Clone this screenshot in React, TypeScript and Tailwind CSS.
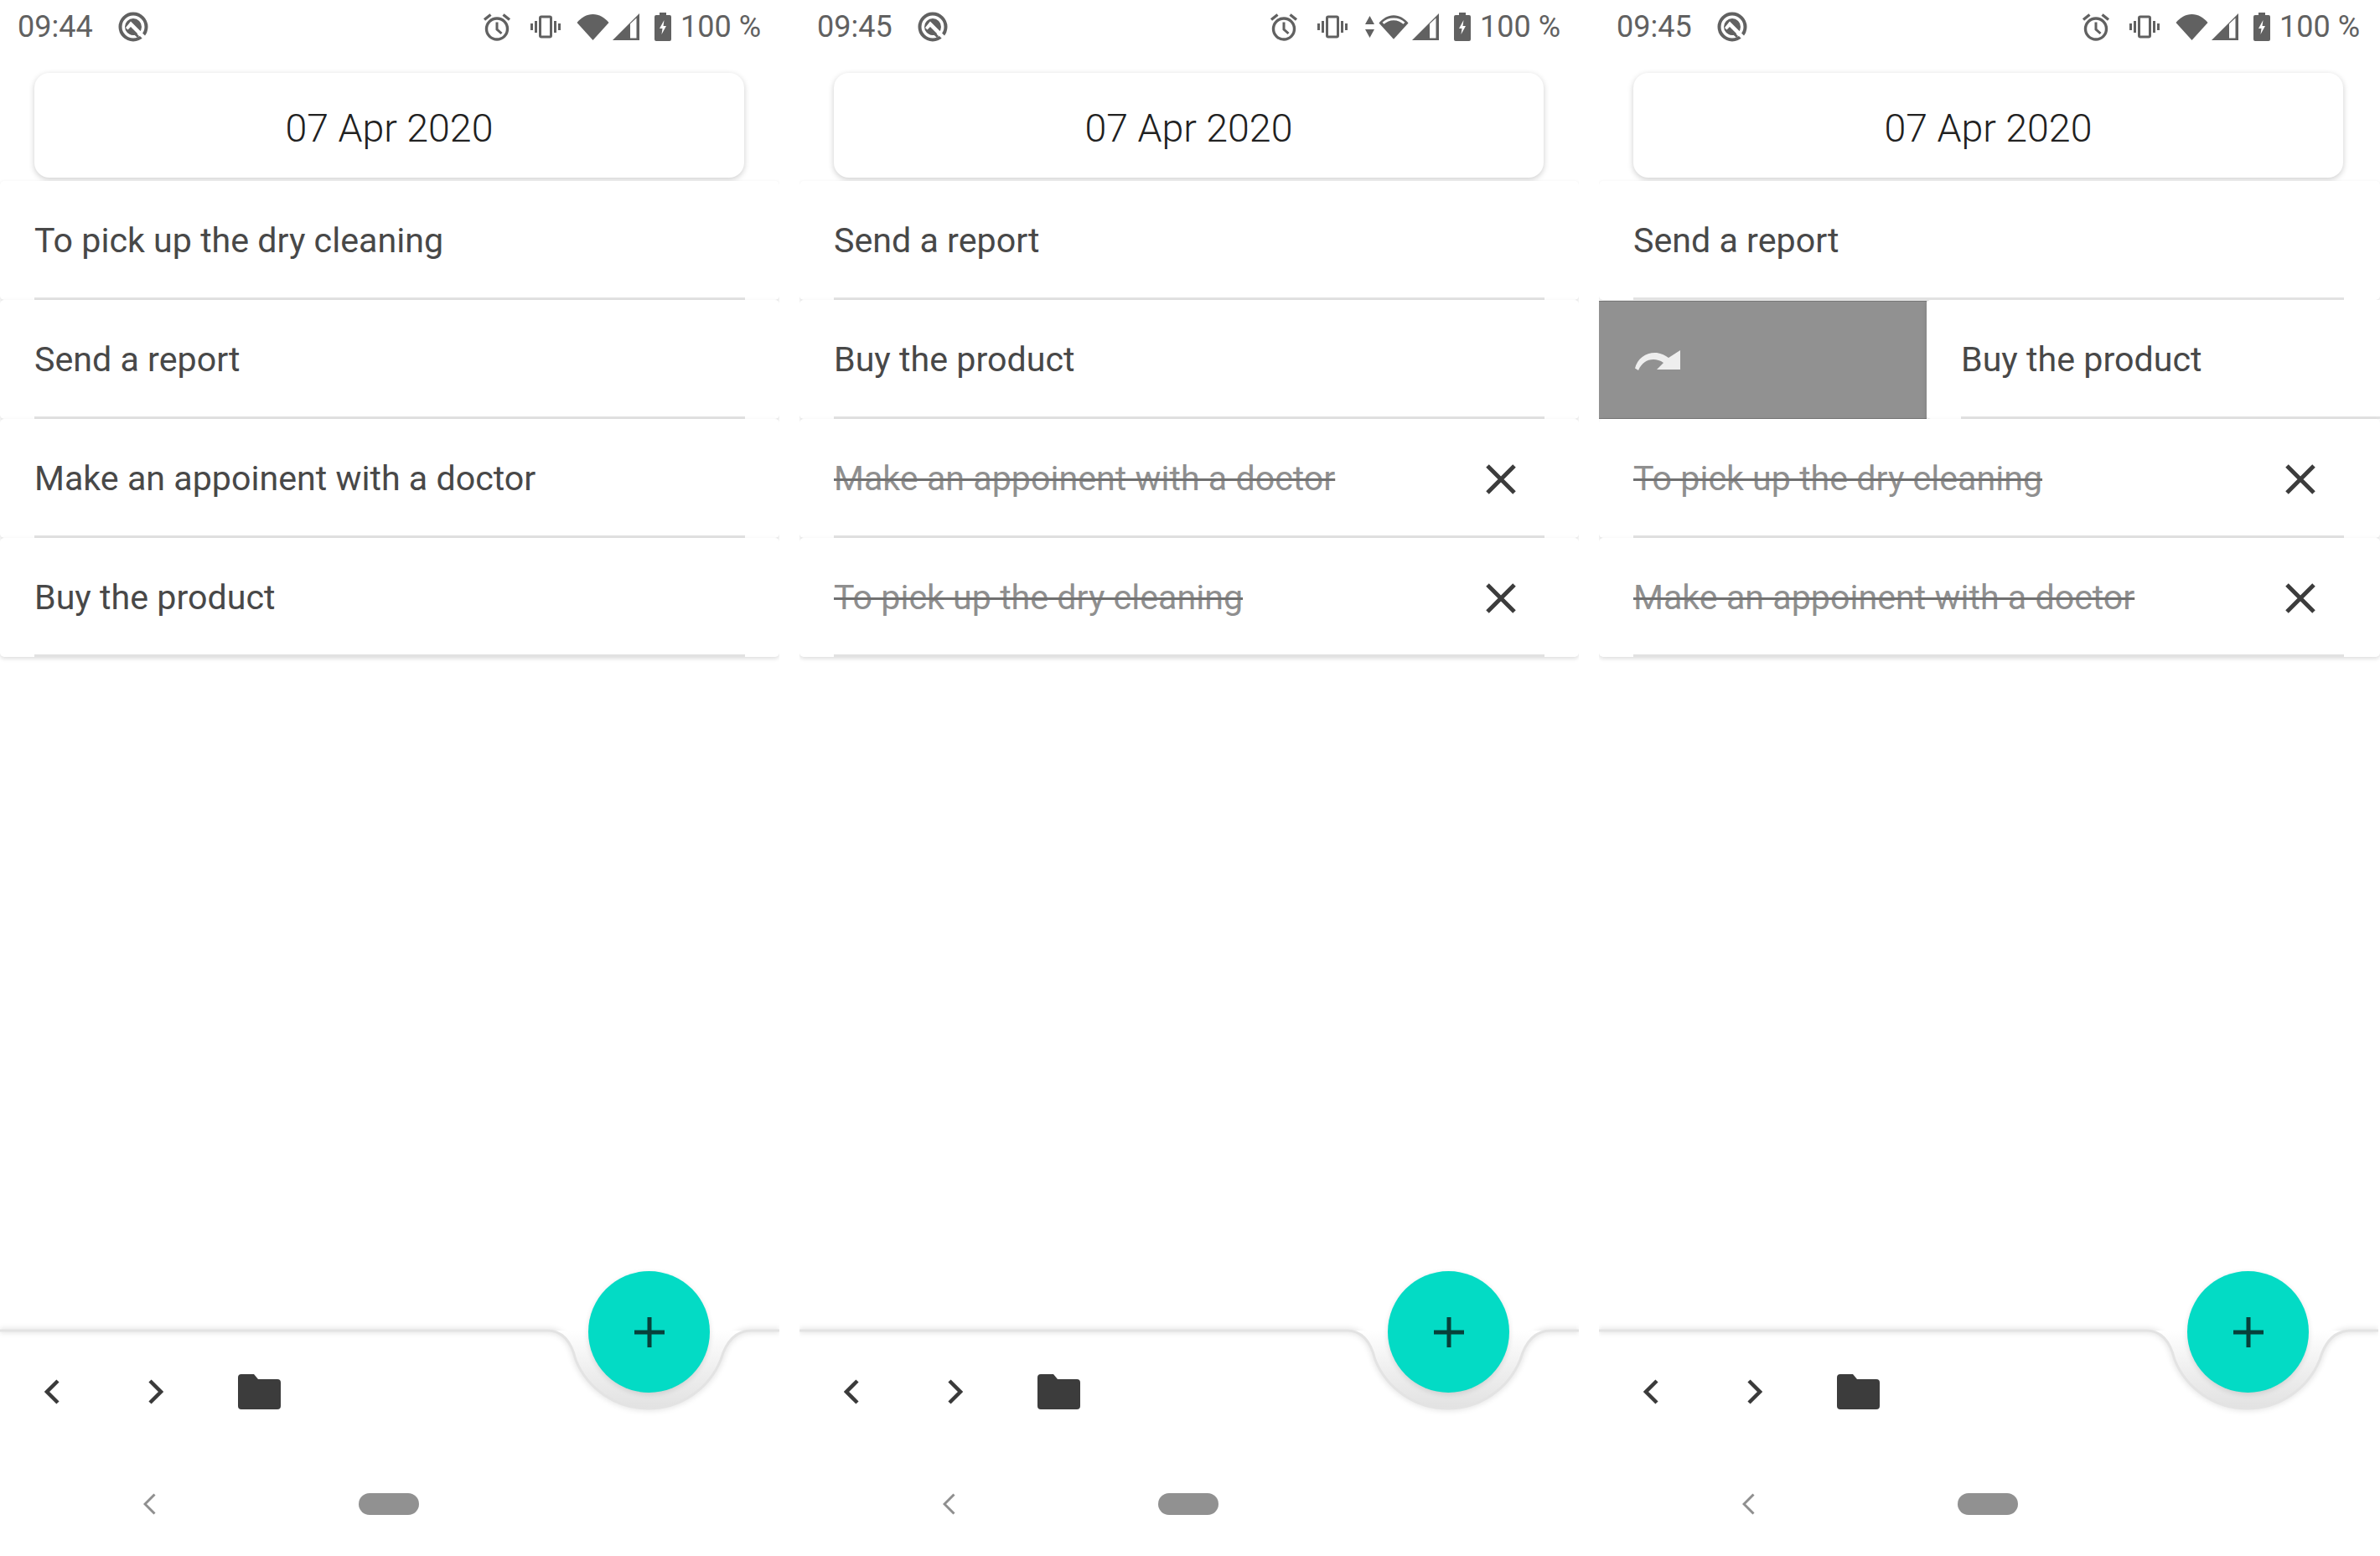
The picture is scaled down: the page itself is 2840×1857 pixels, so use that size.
type Item = { text: string; done?: boolean; swiped?: boolean };

const Alarm = () => (
  <svg width="34" height="34" viewBox="0 0 34 34" fill="none" stroke="#616161" strokeWidth="3.4">
    <circle cx="17" cy="19.5" r="12.5" />
    <path d="M17 11.5v8.5l5.5 5" strokeWidth="3" />
    <path d="M2 8.5 9.5 2.5M32 8.5 24.5 2.5" />
  </svg>
);

const Vibrate = () => (
  <svg width="36" height="28" viewBox="0 0 36 28" fill="none" stroke="#616161" strokeWidth="3">
    <rect x="11.5" y="2" width="13" height="24" rx="1.5" />
    <path d="M1.5 10v8M6.5 7v14M29.5 7v14M34.5 10v8" />
  </svg>
);

const Wifi = ({ active }: { active?: boolean }) => (
  <svg width="39" height="32" viewBox="0 0 39 32" className={active ? "w-[36px]" : ""}>
    <path d="M0.5 11C5.5 5 12 1 19.5 1S33.5 5 38.5 11L19.5 32Z" fill="#616161" />
    {active && <path d="M6 11.5C10 7.5 14.5 6 19.5 6S29 7.5 33 11.5" fill="none" stroke="#fff" strokeWidth="3" />}
  </svg>
);

const Signal = () => (
  <svg width="32" height="32" viewBox="0 0 32 32">
    <path d="M0 32 32 0V32Z" fill="#616161" />
    <path d="M21 31V12.500L28.500 5.500V29.500H21Z" fill="#fff" />
  </svg>
);

const Battery = () => (
  <svg width="20" height="34" viewBox="0 0 20 34">
    <path d="M6 0h8v3h4a2 2 0 0 1 2 2v27a2 2 0 0 1-2 2H2a2 2 0 0 1-2-2V5a2 2 0 0 1 2-2h4Z" fill="#616161" />
    <path d="M11.500 9 6 19h3.500l-1 7L14 16h-3.500Z" fill="#fff" />
  </svg>
);

const QLogo = () => (
  <svg width="36" height="36" viewBox="0 0 36 36" fill="none">
    <circle cx="18" cy="18" r="15.500" stroke="#616161" strokeWidth="4" />
    <circle cx="18" cy="18" r="10" fill="#616161" />
    {/* white fold running out to the lower right */}
    <path d="M15 11.500 33 29.500 30 33 15 18 11.500 21.500 9 19Z" fill="#fff" />
    <path d="M15 21.500 24 30" stroke="#616161" strokeWidth="3" />
    <path d="M16 24 20 28 15 27.500 12 24Z" fill="#616161" />
  </svg>
);

const StatusBar = ({ time, data }: { time: string; data?: boolean }) => (
  <div className="flex h-[87px] w-[930px] items-start justify-between pl-[21px] pr-[22px] pt-[14px] text-[36px] leading-[36px] text-[#616161]">
    <div className="flex items-center">
      <span className="w-[92px]">{time}</span>
      <span className="ml-[28px]">
        <QLogo />
      </span>
    </div>
    <div className="flex items-center">
      <Alarm />
      <span className="ml-[23px]">
        <Vibrate />
      </span>
      {data && (
        <svg width="15" height="30" viewBox="0 0 15 30" className="ml-[19px]">
          <path d="M7.500 2 13 12H2ZM7.500 28 2 18H13Z" fill="#616161" />
        </svg>
      )}
      <span className={data ? "ml-[3px]" : "ml-[19px]"}>
        <Wifi active={data} />
      </span>
      <span className="ml-[4px]">
        <Signal />
      </span>
      <span className="ml-[18px]">
        <Battery />
      </span>
      <span className="ml-[11px]">100 %</span>
    </div>
  </div>
);

const Row = ({ text, done }: Item) => (
  <div className="flex h-[142px] w-full min-w-[930px] shrink-0 flex-col rounded-[5px] bg-white shadow-[0_2px_5px_rgba(0,0,0,0.14)]">
    <div className="flex w-[930px] flex-1 items-center justify-between pl-[41px] pr-[75px] pt-[4px] text-[41.2px]">
      {done ? (
        <>
          <span className="text-[#8f8f8f] line-through decoration-[#707070] decoration-[3px]">{text}</span>
          <svg width="36" height="36" viewBox="0 0 36 36" stroke="#3c3c3c" strokeWidth="5">
            <path d="M2 2 34 34M34 2 2 34" />
          </svg>
        </>
      ) : (
        <span className="text-[#484848]">{text}</span>
      )}
    </div>
    <div className="ml-[41px] h-[3px] w-[848px] bg-[#e2e2e2]" />
  </div>
);

const SwipedRow = ({ text }: Item) => (
  <div className="flex h-[142px] overflow-hidden">
    <div className="mt-[1px] flex h-[141px] w-[391px] shrink-0 items-center border-y border-[#777777] bg-[#919191] pl-[43px]">
      <svg width="54" height="24" viewBox="0 0 54 24" fill="#eeeeee">
        <path d="M0 21.500C3 9 14 2 26 3C32 4 36 6 40 9L54 0V23H26L34 15C30 12 26 11 22 11C14 11 8 15 4 24Z" />
      </svg>
    </div>
    <Row text={text} />
  </div>
);

const BottomBar = () => (
  <div className="relative h-[279px] w-full">
    {/* curved top edge of the app bar, with the notch for the button */}
    <svg width="930" height="120" viewBox="0 0 930 120" fill="none" className="absolute left-0 top-0">
      <defs>
        <linearGradient id="notch" x1="0" y1="10" x2="0" y2="103" gradientUnits="userSpaceOnUse">
          <stop offset="0" stopColor="#ffffff" />
          <stop offset="0.5" stopColor="#efefef" />
          <stop offset="1" stopColor="#e2e2e2" />
        </linearGradient>
        <filter id="soft" x="-5%" y="-30%" width="110%" height="160%">
          <feGaussianBlur stdDeviation="3" />
        </filter>
      </defs>
      <path
        d="M0 10H653C672 10 682 24 687 45A93.500 93.500 0 0 0 860 45C866 24 877 10 897 10H930"
        stroke="#000000"
        strokeOpacity="0.12"
        strokeWidth="5"
        filter="url(#soft)"
      />
      <path d="M653 10C672 10 682 24 687 45A93.500 93.500 0 0 0 860 45C866 24 877 10 897 10Z" fill="url(#notch)" />
      <path
        d="M0 10H653C672 10 682 24 687 45A93.500 93.500 0 0 0 860 45C866 24 877 10 897 10H930"
        stroke="#e3e3e3"
        strokeWidth="3"
      />
    </svg>
    <div className="absolute left-[702px] top-[-61px] flex h-[145px] w-[145px] items-center justify-center rounded-full bg-[#03dbc5] shadow-[0_2px_6px_rgba(0,0,0,0.12)]">
      <svg width="36" height="36" viewBox="0 0 36 36" stroke="#07403a" strokeWidth="5">
        <path d="M18 0V36M0 18H36" />
      </svg>
    </div>
    <div className="flex items-center pl-[53px] pt-[62px]">
      <svg width="18" height="30" viewBox="0 0 18 30" fill="none" stroke="#3a3a3a" strokeWidth="4.500">
        <path d="M16 2 3 15 16 28" />
      </svg>
      <svg width="18" height="30" viewBox="0 0 18 30" fill="none" stroke="#3a3a3a" strokeWidth="4.500" className="ml-[106px]">
        <path d="M2 2 15 15 2 28" />
      </svg>
      <svg width="51" height="42" viewBox="0 0 51 42" fill="#3c3c3c" className="ml-[89px]">
        <path d="M4 0H19L24 6H47A4 4 0 0 1 51 10V38A4 4 0 0 1 47 42H4A4 4 0 0 1 0 38V4A4 4 0 0 1 4 0Z" />
      </svg>
    </div>
    <div className="mt-[100px] flex items-center pl-[171px]">
      <svg width="15" height="26" viewBox="0 0 15 26" fill="none" stroke="#8f8f8f" strokeWidth="3">
        <path d="M13.500 1.500 2 13 13.500 24.500" />
      </svg>
      <div className="ml-[242px] h-[26px] w-[72px] rounded-[13px] bg-[#919191]" />
    </div>
  </div>
);

const Panel = ({ time, data, items, className }: { time: string; data?: boolean; items: Item[]; className: string }) => (
  <div className={`flex h-full flex-col overflow-hidden bg-white ${className}`}>
    <StatusBar time={time} data={data} />
    <div className="mb-[4px] ml-[41px] flex h-[125px] w-[847px] items-center justify-center rounded-[18px] bg-white pt-[8px] text-[46.5px] font-light text-[#212121] shadow-[0_2px_7px_rgba(0,0,0,0.2)]">
      07 Apr 2020
    </div>
    {items.map((item) =>
      item.swiped ? <SwipedRow key={item.text} {...item} /> : <Row key={item.text} {...item} />
    )}
    <div className="flex-1" />
    <BottomBar />
  </div>
);

export default function App() {
  return (
    <div className="flex h-[1857px] w-[2840px] gap-[24px] bg-white font-[Roboto,sans-serif]">
      <Panel
        className="w-[930px]"
        time="09:44"
        items={[
          { text: "To pick up the dry cleaning" },
          { text: "Send a report" },
          { text: "Make an appoinent with a doctor" },
          { text: "Buy the product" },
        ]}
      />
      <Panel
        className="w-[930px]"
        time="09:45"
        data
        items={[
          { text: "Send a report" },
          { text: "Buy the product" },
          { text: "Make an appoinent with a doctor", done: true },
          { text: "To pick up the dry cleaning", done: true },
        ]}
      />
      <Panel
        className="w-[932px]"
        time="09:45"
        items={[
          { text: "Send a report" },
          { text: "Buy the product", swiped: true },
          { text: "To pick up the dry cleaning", done: true },
          { text: "Make an appoinent with a doctor", done: true },
        ]}
      />
    </div>
  );
}
